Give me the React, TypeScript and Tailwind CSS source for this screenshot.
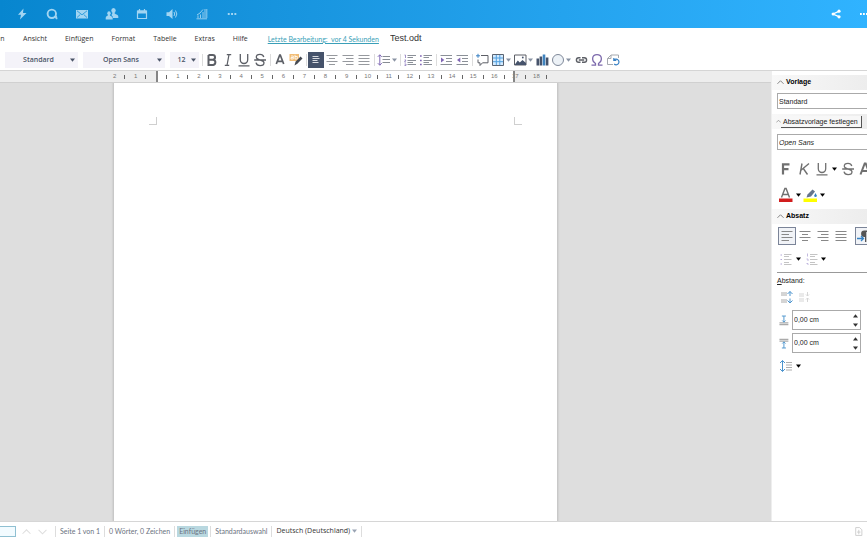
import { useState } from "react"
import type { ReactNode } from "react"

type IconProps = { children: ReactNode; className?: string; size?: number }

const menuItems = ["Ansicht", "Einfügen", "Format", "Tabelle", "Extras", "Hilfe"]
const rulerCells = Array.from({ length: 21 }, (_, i) => Math.abs(i - 2))

function Icon({ children, className = "", size = 16 }: IconProps) {
  return (
    <svg
      viewBox="0 0 16 16"
      width={size}
      height={size}
      fill="none"
      stroke="currentColor"
      className={`shrink-0 ${className}`}
      aria-hidden="true"
    >
      {children}
    </svg>
  )
}

function Caret({ className = "text-[#4b5568]" }: { className?: string }) {
  return (
    <svg viewBox="0 0 5 4" width="5" height="4" fill="currentColor" className={`shrink-0 ${className}`} aria-hidden="true">
      <path d="M0 .5h5L2.500 3.700z" />
    </svg>
  )
}

function Tool({ label, children, active = false }: { label: string; children: ReactNode; active?: boolean }) {
  return (
    <button
      aria-label={label}
      className={`flex size-4 shrink-0 items-center justify-center ${active ? "bg-[#46536b] text-white" : "text-[#5c5f66]"}`}
    >
      <Icon>{children}</Icon>
    </button>
  )
}

function ToolMenu({ label }: { label: string }) {
  return (
    <button aria-label={label} className="flex h-4 w-[6px] shrink-0 items-center">
      <Caret className="text-[#8a93a3]" />
    </button>
  )
}

function Separator() {
  return <div className="flex h-3 w-1 shrink-0 justify-center"><div className="w-px bg-[#dcdcdc]" /></div>
}

function ToolSelect({ label, value, width }: { label: string; value: string; width: string }) {
  return (
    <div className={`relative shrink-0 ${width}`}>
      <select
        aria-label={label}
        className="block h-4 w-full appearance-none bg-[#f4f3f9] pr-[6px] text-[7px] font-semibold text-[#4b5568] [text-align-last:center]"
      >
        <option>{value}</option>
      </select>
      <div className="pointer-events-none absolute inset-y-0 right-[3px] flex items-center">
        <Caret />
      </div>
    </div>
  )
}

// Text glyphs used as icons in the toolbar and the sidebar
const boldPath = <path d="M4.500 3v10h4.700a2.700 2.700 0 0 0 0-5.300H4.500M4.500 3h4.200a2.300 2.300 0 0 1 0 4.700" strokeWidth="2" />
const italicPath = <path d="M6.800 2.700h4.400M4.800 13.300h4.400M9 2.700 7 13.300" strokeWidth="1.200" />
const underlinePath = <path d="M4.300 2v5.800a3.700 3.700 0 0 0 7.400 0V2M2.500 13.800h11" strokeWidth="1.300" />
const strikePath = (
  <path d="M11.800 5c-.5-1.700-1.900-2.700-3.800-2.700-2.300 0-3.700 1.100-3.700 2.800 0 3.900 7.700 2 7.700 5.700 0 1.800-1.600 2.900-3.900 2.900S4.400 12.600 4 10.700M2.200 8h11.800" strokeWidth="1.300" />
)
const lines = {
  left: "M2.500 3.500h11M2.500 6.500h7.500M2.500 9.500h11M2.500 12.500h7.500",
  center: "M2.500 3.500h11M5 6.500h6M2.500 9.500h11M5 12.500h6",
  right: "M2.500 3.500h11M6 6.500h7.500M2.500 9.500h11M6 12.500h7.500",
  justify: "M2.500 3.500h11M2.500 6.500h11M2.500 9.500h11M2.500 12.500h11",
}

function TopBar() {
  return (
    <header className="flex h-7 shrink-0 items-center bg-linear-to-r from-[#0786cf] to-[#30b3ff] text-white">
      <nav aria-label="Apps" className="flex grow pl-[7px] text-[#a2d5f2] *:flex *:w-[30px] *:justify-center">
        <a href="#activity" aria-label="Aktivität">
          <Icon><path d="M9.500 2.500 4 8.800h3L6 13.500 12.500 7H9z" fill="currentColor" stroke="none" /></Icon>
        </a>
        <a href="#talk" aria-label="Talk">
          <Icon><circle cx="7.800" cy="7.800" r="4.200" strokeWidth="1.900" /><path d="m10 10.800 3 2.300-.5-3z" fill="currentColor" /></Icon>
        </a>
        <a href="#mail" aria-label="Mail">
          <Icon>
            <path d="M2 4h12v8.500H2z" fill="currentColor" stroke="none" />
            <path d="m3 4.800 5 4 5-4M3 11.500l3.300-3M13 11.500l-3.300-3" stroke="#1590d8" strokeWidth=".8" />
          </Icon>
        </a>
        <a href="#contacts" aria-label="Kontakte">
          <Icon>
            <g fill="currentColor" stroke="none">
              <ellipse cx="9.500" cy="4.600" rx="2.200" ry="2.600" />
              <path d="M8.500 7h2c.2 1.500 3.800 1.200 3.800 3.600V12H9c0-2-1.500-2.500-1.500-3z" />
              <ellipse cx="5" cy="7.200" rx="1.700" ry="2" />
              <path d="M4.200 9h1.600c.3 1.400 2.900 1.200 2.900 3.200v1.300H1.700v-1.700C1.700 10 4 10 4.200 9z" />
            </g>
          </Icon>
        </a>
        <a href="#calendar" aria-label="Kalender">
          <Icon><path d="M3.500 5h9v7.500h-9zM5.500 3v2M10.500 3v2" strokeWidth="1.200" /><path d="M3.500 4.500h9v3h-9z" fill="currentColor" stroke="none" /></Icon>
        </a>
        <a href="#audio" aria-label="Audio">
          <Icon><path d="M2.500 6.300H5L8.500 3v10L5 10H2.500z" fill="currentColor" stroke="none" /><path d="M10 6q1.500 2 0 4M11.500 4.500q2.700 3.500 0 7" /></Icon>
        </a>
        <a href="#analytics" aria-label="Analyse">
          <Icon><path d="m3 9 3-2 3-3.500M4 12V9.500M6.500 12V8.500M9 12V6M11 12V3M12.800 12V3M2.500 12.800h10.500" strokeWidth=".9" /></Icon>
        </a>
        <a href="#more" aria-label="Weitere Apps">
          <Icon><path d="M3.800 8h1.900M7.100 8H9M10.400 8h1.900" strokeWidth="1.900" /></Icon>
        </a>
      </nav>
      <button aria-label="Teilen" className="mr-[15px]">
        <Icon>
          <path d="M12 4.800 5 8l7 3.200" strokeWidth="1.300" />
          <g fill="currentColor" stroke="none"><circle cx="11" cy="5.200" r="1.600" /><circle cx="5.200" cy="8" r="1.600" /><circle cx="11" cy="10.800" r="1.600" /></g>
        </Icon>
      </button>
      <button aria-label="Mehr" className="w-2 overflow-hidden">
        <Icon><path d="M1 8h1.800M4 8h1.800M7 8h1.800" strokeWidth="1.800" /></Icon>
      </button>
    </header>
  )
}

function MenuBar() {
  return (
    <div className="flex h-[22px] shrink-0 items-center text-[7px] text-[#333]">
      <nav aria-label="Menü" className="flex gap-[18px]">
        <button className="w-[5px]">n</button>
        {menuItems.map((item) => (
          <button key={item}>{item}</button>
        ))}
      </nav>
      <a href="#history" className="ml-5 font-[Lato,'Open_Sans',sans-serif] whitespace-pre text-[#3a9fb8] underline">
        {"Letzte Bearbeitung:  vor 4 Sekunden"}
      </a>
      <input
        aria-label="Dokumentname"
        defaultValue="Test.odt"
        className="ml-[11px] w-20 font-['Liberation_Sans',sans-serif] text-[9px] text-[#333]"
      />
    </div>
  )
}

function Toolbar() {
  return (
    <div role="toolbar" aria-label="Formatierung" className="flex h-[21px] shrink-0 items-center overflow-hidden border-b border-[#d5d5d5] pl-[5px]">
      <div className="mr-px flex gap-[5px]">
        <ToolSelect label="Absatzvorlage" value="Standard" width="w-[73px]" />
        <ToolSelect label="Schriftart" value="Open Sans" width="w-[82px]" />
        <ToolSelect label="Schriftgröße" value="12" width="w-[29px]" />
      </div>
      <Separator />
      <Tool label="Fett">{boldPath}</Tool>
      <Tool label="Kursiv">{italicPath}</Tool>
      <Tool label="Unterstrichen">{underlinePath}</Tool>
      <Tool label="Durchgestrichen">{strikePath}</Tool>
      <Separator />
      <Tool label="Schriftfarbe"><path d="m4.300 12 3.400-9h.6l3.400 9M5.700 9.300h4.600" strokeWidth="1.700" /></Tool>
      <Tool label="Hervorheben">
        <path d="M1.500 2h9.500v7H1.500z" fill="#f2bd75" stroke="none" />
        <path d="M3 4h2.300v3H3V5.500h2M7 2.800V7h2.300V4.500H7" stroke="#fff" strokeWidth=".8" />
        <path d="m6.500 13.500 1-3.700 5-5.300 2 2-5.200 5.200z" fill="#464a52" stroke="none" />
      </Tool>
      <Separator />
      <Tool label="Linksbündig" active><path d="M4.500 4.500h6M4.500 6.500h7M4.500 8.500h5M4.500 10.500h6" strokeWidth=".8" /></Tool>
      <Tool label="Zentriert"><path d={lines.center} className="stroke-[#96999e]" /></Tool>
      <Tool label="Rechtsbündig"><path d={lines.right} className="stroke-[#96999e]" /></Tool>
      <Tool label="Blocksatz"><path d={lines.justify} className="stroke-[#96999e]" /></Tool>
      <Separator />
      <Tool label="Zeilenabstand">
        <path d="M6.500 4.500H14M6.500 7.500H14M6.500 10.500H14" stroke="#888d94" />
        <path d="M3.800 2.800v10.400M1.800 4.800l2-2 2 2M1.800 11.200l2 2 2-2" stroke="#806ab5" />
      </Tool>
      <ToolMenu label="Zeilenabstand wählen" />
      <Separator />
      <Tool label="Nummerierung">
        <path d="M5.500 3.500H14M5.500 5.500H11M5.500 8.500H14M5.500 10.500H11M5.500 12.500H14" stroke="#8b9098" />
        <path d="M2.500 3h1v3M2.500 8h1.500L2.500 10H4M2.500 12H4v1.500H2.500" stroke="#8b78bd" strokeWidth=".8" />
      </Tool>
      <Tool label="Aufzählung">
        <path d="M5.500 3.500H14M5.500 5.500H11M5.500 8.500H14M5.500 10.500H11M5.500 12.500H14" stroke="#8b9098" />
        <path d="M2 4h1.700M2 8.500h1.700M2 12.500h1.700" stroke="#8066b5" strokeWidth="1.500" />
      </Tool>
      <Separator />
      <Tool label="Einzug erhöhen">
        <path d="M2.500 3.500h11.500M8 6.500h6M8 9.500h6M2.500 12.500h11.500" stroke="#8b9098" />
        <path d="m3 5.500 3.300 2.500L3 10.500z" fill="#8066b5" stroke="none" />
      </Tool>
      <Tool label="Einzug verringern">
        <path d="M2.500 3.500h11.500M8 6.500h6M8 9.500h6M2.500 12.500h11.500" stroke="#8b9098" />
        <path d="M6.300 5.500 3 8l3.300 2.500z" fill="#8066b5" stroke="none" />
      </Tool>
      <Separator />
      <Tool label="Kommentar">
        <path d="M7 3.500h7v7.300H8.500L6 13.500v-2.700H4V7.500" />
        <path d="M4 1.800v4M2 3.800h4" stroke="#3981c4" />
      </Tool>
      <Tool label="Tabelle">
        <path d="M2.500 2.500h11v11h-11z" fill="#d6ecff" stroke="#5b6472" />
        <path d="M3 6h10M3 9.700h10M6.300 3v10M9.800 3v10" stroke="#52a0df" />
      </Tool>
      <ToolMenu label="Tabelle wählen" />
      <Tool label="Bild">
        <path d="M2.500 3h11.500v10H2.500z" />
        <path d="m2.500 13 3.300-4.500 2 2L10.500 8l3.500 3v2z" fill="#46536b" stroke="none" />
        <circle cx="10.800" cy="5.500" r=".9" fill="#46536b" stroke="none" />
      </Tool>
      <ToolMenu label="Bildquelle" />
      <Tool label="Diagramm">
        <path d="M2.500 6.500h2.600v7H2.500zM11.800 5.500h2.600v8h-2.600z" fill="#46536b" stroke="none" />
        <path d="M5.600 4.500h2.600v9H5.600z" fill="#46536b" stroke="none" />
        <path d="M8.700 2.500h2.600v11H8.700z" fill="#3f83bf" stroke="none" />
      </Tool>
      <Tool label="Form"><circle cx="8" cy="8" r="5.500" fill="#edf2f7" stroke="#7f8899" /></Tool>
      <ToolMenu label="Form wählen" />
      <div className="ml-px flex">
        <Tool label="Link">
          <path d="M7.500 5.700H5.700a2.300 2.300 0 0 0 0 4.600h1.800M9 5.700h2.300a2.300 2.300 0 0 1 0 4.600H9M5.800 8h5.400" strokeWidth="1.400" />
        </Tool>
        <Tool label="Sonderzeichen">
          <path d="M2.500 13.200h4v-1.700C2.300 8.800 2.700 2.600 8 2.600s5.700 6.200 1.500 8.900v1.700h4" stroke="#7c69ac" strokeWidth="1.300" />
        </Tool>
        <Tool label="Drehen">
          <path d="M8 12.500H2.500V6.500L6 3h7.500v3M2.500 6.500H6V3" stroke="#a5a9af" />
          <path d="M9 8.200a2.800 2.800 0 1 1 .2 3.800M8.800 6v2.500h2.500" stroke="#3981c4" strokeWidth="1.200" />
        </Tool>
      </div>
    </div>
  )
}

function Ruler() {
  return (
    <div className="grid h-3 shrink-0 grid-cols-[157px_357px_1fr] overflow-hidden border-b border-[#d0d0d0] bg-[#ededed]">
      <div className="col-start-2 row-start-1 bg-white" />
      <div className="col-span-3 col-start-1 row-start-1 ml-[104px] flex h-[11px] w-[443px] items-center font-['Liberation_Sans',sans-serif] text-[6px] text-[#777]">
        {rulerCells.map((cm, i) => (
          <div key={i} className="flex flex-1 items-center">
            <span className="grow pl-px text-center">{cm === 0 ? "" : cm}</span>
            <span className="h-1 w-px bg-[#666]" />
          </div>
        ))}
      </div>
      <div className="col-start-2 row-start-1 -mx-px border-x-2 border-[#858585]" />
    </div>
  )
}

function DocumentArea() {
  return (
    <main className="flex min-h-0 min-w-0 grow flex-col">
      <Ruler />
      <div className="flex min-h-0 grow overflow-hidden bg-[#dedede] pl-[114px]">
        <article aria-label="Seite 1" className="w-[443px] shrink-0 bg-white shadow-[0_0_2px_1px_#bebebe]">
          <div className="flex justify-between px-[35px] pt-[34px]">
            <div className="size-2 border-r border-b border-[#cfcfcf]" />
            <div className="size-2 border-b border-l border-[#cfcfcf]" />
          </div>
        </article>
      </div>
    </main>
  )
}

function SectionTitle({ children }: { children: ReactNode }) {
  return (
    <h2 className="flex h-[15px] items-center gap-[2px] bg-linear-to-r from-[#f8f8f8] to-[#ededed] pl-[5px] text-[7px] font-bold text-black">
      <Icon size={7} className="text-[#777]"><path d="m1 11 7-7 7 7" strokeWidth="2" /></Icon>
      {children}
    </h2>
  )
}

function SideButton({ label, children, active = false }: { label: string; children: ReactNode; active?: boolean }) {
  return (
    <button
      aria-label={label}
      className={`flex size-[18px] shrink-0 items-center justify-center text-[#707070] ${active ? "border border-[#7b8498] bg-[#f1f3f7]" : ""}`}
    >
      <Icon>{children}</Icon>
    </button>
  )
}

function SpacingField({ label, children }: { label: string; children: ReactNode }) {
  const [value, setValue] = useState(0)
  const text = value.toFixed(2).replace(".", ",") + " cm"

  return (
    <div className="flex items-center">
      <div className="flex w-[15px] items-center text-[#5298cf]"><Icon size={13}>{children}</Icon></div>
      <div className="flex h-5 w-[69px] border border-[#aaa]">
        <input aria-label={label} value={text} readOnly className="w-0 grow pl-px" />
        <div className="flex w-[9px] flex-col items-center justify-around">
          <button aria-label={`${label} erhöhen`} onClick={() => setValue(value + 0.1)}>
            <Caret className="rotate-180 text-[#333]" />
          </button>
          <button aria-label={`${label} verringern`} onClick={() => setValue(Math.max(0, value - 0.1))}>
            <Caret className="text-[#333]" />
          </button>
        </div>
      </div>
    </div>
  )
}

function Sidebar() {
  return (
    <aside className="w-24 shrink-0 overflow-hidden border-l border-[#eee] bg-white pt-1 font-['Liberation_Sans',sans-serif] text-[7px] text-[#222]">
      <SectionTitle>Vorlage</SectionTitle>
      <div className="mt-[3px] ml-[5px] w-[120px]">
        <input aria-label="Absatzvorlage" defaultValue="Standard" className="block h-4 w-full border border-[#aaa] px-px" />
      </div>
      <div className="mt-[5px] flex h-[15px] items-center bg-linear-to-r from-[#f8f8f8] to-[#ededed] pl-[4px]">
        <Icon size={5} className="text-[#777]"><path d="m1 11 7-7 7 7" strokeWidth="2" /></Icon>
        <span className="w-[81px] border-r border-b border-[#555] bg-[#f7f7f7] pl-[2px] leading-[11px] whitespace-nowrap">
          Absatzvorlage festlegen
        </span>
      </div>
      <div className="mt-[5px] ml-[5px] w-[120px]">
        <input aria-label="Schriftname" defaultValue="Open Sans" className="block h-4 w-full border border-[#aaa] px-px italic" />
      </div>

      <div className="mt-[10px] ml-[5px] flex w-[120px] items-center">
        <SideButton label="Fett"><path d="M5 13.500V3.300h6.500M5 8.200h5.500" strokeWidth="2.200" /></SideButton>
        <SideButton label="Kursiv"><path d="M6 2.500 4 13.500M13 2.500 4.700 9.500M7.300 7.500 11.500 13.500" strokeWidth="1.400" /></SideButton>
        <SideButton label="Unterstrichen">{underlinePath}</SideButton>
        <button aria-label="Unterstreichung wählen" className="w-2"><Caret className="ml-px text-black" /></button>
        <SideButton label="Durchgestrichen">{strikePath}</SideButton>
        <SideButton label="Schatten"><path d="m2.500 13.500 4.200-11h1l4.200 11M4.500 10h6" strokeWidth="2" /></SideButton>
      </div>
      <div className="mt-2 ml-[5px] flex w-[120px] items-center">
        <SideButton label="Schriftfarbe">
          <path d="m3.500 10.500 3.400-9h1.200l3.400 9M4.700 7.500h5.600" strokeWidth="1.400" />
          <path d="M1 11.500h13.500V15H1z" fill="#d11d1d" stroke="none" />
        </SideButton>
        <button aria-label="Schriftfarbe wählen" className="w-[7px]"><Caret className="ml-px text-black" /></button>
        <SideButton label="Hervorhebungsfarbe">
          <path d="m3.500 10.500 1-3L9.500 2.500l2.500 2-4 5z" fill="#66758c" stroke="none" />
          <path d="M12.500 6 14 9q-1.500 2-3 0z" fill="#3682c4" stroke="none" />
          <path d="M.5 11.500h13.500V15H.5z" fill="#ffff00" stroke="none" />
        </SideButton>
        <button aria-label="Hervorhebung wählen" className="w-[7px]"><Caret className="text-black" /></button>
      </div>

      <div className="mt-[5px]"><SectionTitle>Absatz</SectionTitle></div>
      <div className="mt-[3px] ml-[6px] flex w-[120px] items-center">
        <SideButton label="Linksbündig" active><path d={lines.left} stroke="#888" /></SideButton>
        <SideButton label="Zentriert"><path d={lines.center} stroke="#888" /></SideButton>
        <SideButton label="Rechtsbündig"><path d={lines.right} stroke="#888" /></SideButton>
        <SideButton label="Blocksatz"><path d={lines.justify} stroke="#888" /></SideButton>
        <div className="ml-[5px]">
          <SideButton label="Von links nach rechts" active>
            <path d="M15 2.500H8.300a3.200 3.200 0 0 0 0 6.400H9V14h1.300V4h1.500v10h1.300V4H15z" fill="#555" stroke="none" />
            <path d="M1 10.500h6.500M5 8l2.500 2.500L5 13" stroke="#3682c4" strokeWidth="1.300" />
          </SideButton>
        </div>
      </div>
      <div className="mt-[5px] ml-[5px] flex items-center">
        <SideButton label="Aufzählung">
          <path d="M6 3.500h7.500M6 5.500h5M6 8.500h7.500M6 11.500h5M6 13.500h7.500" stroke="#b5b5b5" strokeWidth=".8" />
          <path d="M2.500 4H4M2.500 8.500H4M2.500 13H4" stroke="#b4a8d8" />
        </SideButton>
        <button aria-label="Aufzählung wählen" className="w-2"><Caret className="ml-px text-black" /></button>
        <SideButton label="Nummerierung">
          <path d="M6 3.500h7.500M6 5.500h5M6 8.500h7.500M6 11.500h5M6 13.500h7.500" stroke="#b5b5b5" strokeWidth=".8" />
          <path d="M3.500 2.500v3M2.500 8H4v2M2.500 12.500H4V14" stroke="#b4a8d8" strokeWidth=".8" />
        </SideButton>
        <button aria-label="Nummerierung wählen" className="w-2"><Caret className="text-black" /></button>
      </div>
      <hr className="mt-1 ml-[5px] border-[#999]" />
      <div className="mt-[3px] ml-[5px] leading-[10px]"><u>A</u>bstand:</div>
      <div className="mt-[2px] ml-[5px] flex">
        <SideButton label="Absatzabstand erhöhen">
          <path d="M3 4h6M3 6h6M3 11h6M3 13h6" stroke="#aaa" />
          <path d="M12 7V2.500M9.500 5 12 2.500 14.500 5M12 9.500V14M9.500 11.500 12 14l2.500-2.500" stroke="#4c94ce" />
        </SideButton>
        <SideButton label="Absatzabstand verringern">
          <path d="M3 5h5M3 7h5M3 10h5M3 12h5M11.500 3v4M10 5.500l1.500 1.500L13 5.500M11.500 13V9M10 10.500 11.500 9l1.500 1.500" stroke="#d5d5d5" />
        </SideButton>
      </div>
      <div className="mt-1 ml-[5px] flex flex-col gap-[3px]">
        <SpacingField label="Abstand über Absatz">
          <path d="M3 11h11M3 13h11" stroke="#aaa" strokeWidth="1.500" />
          <path d="M8.500 2.500V10M6 2.500h5M6.500 8l2 2 2-2" strokeWidth="1.200" />
        </SpacingField>
        <SpacingField label="Abstand unter Absatz">
          <path d="M3 3h11M3 5h11" stroke="#aaa" strokeWidth="1.500" />
          <path d="M8.500 6v7.500M6 13.500h5M6.500 8l2-2 2 2" strokeWidth="1.200" />
        </SpacingField>
      </div>
      <div className="mt-1 ml-[5px] flex items-center">
        <SideButton label="Zeilenabstand">
          <path d="M8 4.500h6M8 7h6M8 9.500h6M8 12h6" stroke="#999" strokeWidth=".8" />
          <path d="M4.500 2.500v11M2 5l2.500-2.500L7 5M2 11l2.500 2.500L7 11" stroke="#4c94ce" />
        </SideButton>
        <button aria-label="Zeilenabstand wählen" className="w-2"><Caret className="ml-px text-black" /></button>
      </div>
    </aside>
  )
}

function StatusBar() {
  return (
    <footer className="flex h-[19px] shrink-0 items-center border-t border-[#d6d6d6] font-[Lato,'Open_Sans',sans-serif] text-[7px] text-[#6b7280]">
      <input aria-label="Suchen" className="h-[11px] w-4 border border-l-0 border-[#8fc0d2] bg-[#f2fbff]" />
      <button aria-label="Vorheriges" className="ml-[6px] text-[#dedede]">
        <Icon size={9}><path d="m1 12 7-7 7 7" strokeWidth="1.800" /></Icon>
      </button>
      <button aria-label="Nächstes" className="mr-2 ml-[7px] text-[#dedede]">
        <Icon size={9}><path d="m1 5 7 7 7-7" strokeWidth="1.800" /></Icon>
      </button>
      <div className="flex h-[11px] items-center divide-x divide-[#ddd] *:flex *:h-full *:items-center *:whitespace-nowrap">
        <span className="w-0" />
        <span className="px-1">Seite 1 von 1</span>
        <span className="px-1">0 Wörter, 0 Zeichen</span>
        <span className="px-[2px]"><button className="h-full bg-[#b9d8e0] px-[2px]">Einfügen</button></span>
        <span className="px-1">Standardauswahl</span>
        <button className="gap-[2px] px-1 font-['Open_Sans','Noto_Sans',sans-serif] text-[#333]">
          Deutsch (Deutschland)
          <Caret className="text-[#9aa3b3]" />
        </button>
        <span className="w-0" />
      </div>
      <button aria-label="Dokument einpassen" className="mr-1 ml-auto text-[#c8c8c8]">
        <Icon size={9}><path d="M3 1h7l4 4v10H3zM8.500 5v8M5.500 9h6" strokeWidth="1.500" /></Icon>
      </button>
    </footer>
  )
}

export default function App() {
  return (
    <div className="flex h-screen flex-col overflow-hidden bg-white font-['Open_Sans','Noto_Sans',sans-serif]">
      <TopBar />
      <MenuBar />
      <Toolbar />
      <div className="flex min-h-0 grow">
        <DocumentArea />
        <Sidebar />
      </div>
      <StatusBar />
    </div>
  )
}
